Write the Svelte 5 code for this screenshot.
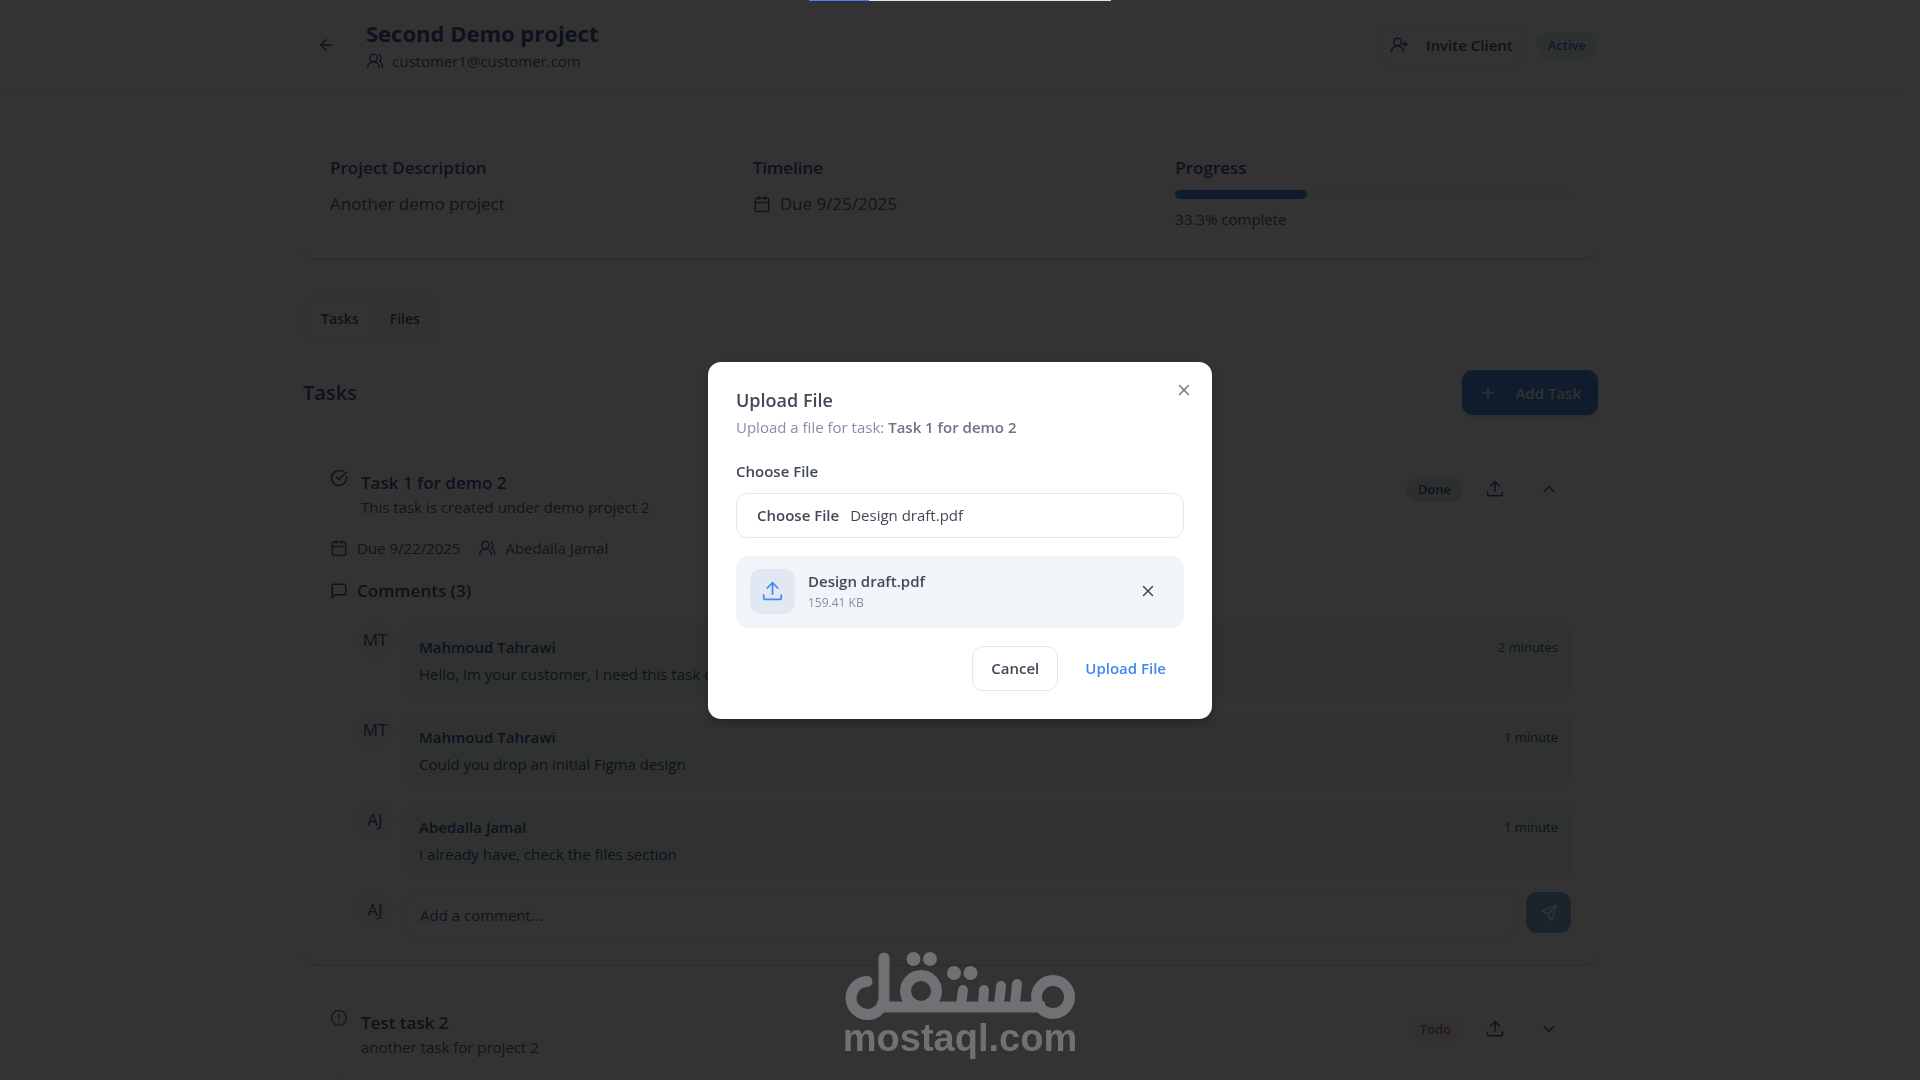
<script>
	let comment = $state('');

	const stats = { description: 'Another demo project', due: 'Due 9/25/2025', progress: 33.3 };

	const comments = [
		{ initials: 'MT', name: 'Mahmoud Tahrawi', text: 'Hello, Im your customer, I need this task done', time: '2 minutes' },
		{ initials: 'MT', name: 'Mahmoud Tahrawi', text: 'Could you drop an initial Figma design', time: '1 minute' },
		{ initials: 'AJ', name: 'Abedalla Jamal', text: 'I already have, check the files section', time: '1 minute' }
	];

	const icons = {
		back: ['m12 19-7-7 7-7', 'M19 12H5'],
		users: ['M18 21a8 8 0 0 0-16 0', 'M10 3a5 5 0 1 0 0 10a5 5 0 1 0 0-10', 'M22 20c0-3.37-2-6.5-4-8a5 5 0 0 0-.45-8.3'],
		userPlus: ['M2 21a8 8 0 0 1 16 0', 'M10 3a5 5 0 1 0 0 10a5 5 0 1 0 0-10', 'M20 8v6', 'M23 11h-6'],
		calendar: ['M8 2v4', 'M16 2v4', 'M5 4h14a2 2 0 0 1 2 2v14a2 2 0 0 1-2 2H5a2 2 0 0 1-2-2V6a2 2 0 0 1 2-2z', 'M3 10h18'],
		check: ['M21.8 10A10 10 0 1 1 17 3.34', 'm9 11 3 3L22 4'],
		alert: ['M12 2a10 10 0 1 0 0 20a10 10 0 1 0 0-20', 'M12 7v6', 'M12 16.5v.5'],
		message: ['M21 15a2 2 0 0 1-2 2H7l-4 4V5a2 2 0 0 1 2-2h14a2 2 0 0 1 2 2z'],
		upload: ['M12 15V2', 'm6 8 6-6 6 6', 'M2 16v3a2 2 0 0 0 2 2h16a2 2 0 0 0 2-2v-3'],
		plus: ['M5 12h14', 'M12 5v14'],
		up: ['m18 15-6-6-6 6'],
		down: ['m6 9 6 6 6-6'],
		close: ['M18 6 6 18', 'M6 6l12 12'],
		send: ['M22 2 15 22 11 13 2 9z', 'M22 2 11 13']
	};
</script>

{#snippet icon(name, size = 18)}
	<svg class="icon" viewBox="0 0 24 24" width={size} height={size} aria-hidden="true">
		{#each icons[name] as d}<path {d} />{/each}
	</svg>
{/snippet}

{#snippet taskActions(status, open)}
	<div class="task-actions">
		<span class="badge {status.toLowerCase()}">{status}</span>
		<button class="icon-btn" aria-label="Upload file">{@render icon('upload')}</button>
		<button class="icon-btn" aria-label={open ? 'Collapse' : 'Expand'}>{@render icon(open ? 'up' : 'down')}</button>
	</div>
{/snippet}

<div class="page">
	<header>
		<div class="wrap bar">
			<button class="icon-btn back" aria-label="Back">{@render icon('back')}</button>
			<div class="heading">
				<h1>Second Demo project</h1>
				<p class="meta">{@render icon('users')}<span>customer1@customer.com</span></p>
			</div>
			<button class="btn outline invite">{@render icon('userPlus')}Invite Client</button>
			<span class="badge active">Active</span>
		</div>
	</header>

	<main class="wrap">
		<section class="card stats">
			<div>
				<h3>Project Description</h3>
				<p>{stats.description}</p>
			</div>
			<div>
				<h3>Timeline</h3>
				<p class="due">{@render icon('calendar')}{stats.due}</p>
			</div>
			<div>
				<h3>Progress</h3>
				<div class="track"><div class="fill" style="width: {stats.progress}%"></div></div>
				<p class="percent">{stats.progress}% complete</p>
			</div>
		</section>

		<div class="tabs" role="tablist">
			<button role="tab" aria-selected="true">Tasks</button>
			<button role="tab" aria-selected="false">Files</button>
		</div>

		<div class="section-head">
			<h2>Tasks</h2>
			<button class="btn primary">{@render icon('plus')}Add Task</button>
		</div>

		<article class="card task">
			<div class="task-head">
				<span class="state">{@render icon('check')}</span>
				<div class="task-title">
					<h3>Task 1 for demo 2</h3>
					<p>This task is created under demo project 2</p>
				</div>
				{@render taskActions('Done', true)}
			</div>
			<div class="task-meta">
				<span>{@render icon('calendar')}Due 9/22/2025</span>
				<span>{@render icon('users')}Abedalla Jamal</span>
			</div>
			<h4>{@render icon('message')}Comments (3)</h4>
			<ul>
				{#each comments as c}
					<li>
						<span class="avatar">{c.initials}</span>
						<div class="bubble">
							<div class="bubble-head"><strong>{c.name}</strong><time>{c.time}</time></div>
							<p>{c.text}</p>
						</div>
					</li>
				{/each}
			</ul>
			<form class="reply" onsubmit={(e) => e.preventDefault()}>
				<span class="avatar">AJ</span>
				<input type="text" aria-label="Add a comment" placeholder="Add a comment..." bind:value={comment} />
				<button class="send" aria-label="Send">{@render icon('send')}</button>
			</form>
		</article>

		<article class="card task">
			<div class="task-head">
				<span class="state todo-state">{@render icon('alert')}</span>
				<div class="task-title">
					<h3>Test task 2</h3>
					<p>another task for project 2</p>
				</div>
				{@render taskActions('Todo', false)}
			</div>
			<div class="task-meta">
				<span>{@render icon('calendar')}</span>
			</div>
		</article>
	</main>
</div>

<div class="overlay">
	<div class="dialog" role="dialog" aria-modal="true" aria-labelledby="dialog-title">
		<button class="close" aria-label="Close">{@render icon('close')}</button>
		<h2 id="dialog-title">Upload File</h2>
		<p class="sub">Upload a file for task: <b>Task 1 for demo 2</b></p>
		<label for="file">Choose File</label>
		<div class="file-field">
			<button id="file">Choose File</button>
			<span>Design draft.pdf</span>
		</div>
		<div class="file-row">
			<span class="file-icon">{@render icon('upload', 21)}</span>
			<div class="file-info">
				<strong>Design draft.pdf</strong>
				<small>159.41 KB</small>
			</div>
			<button class="icon-btn remove" aria-label="Remove file">{@render icon('close')}</button>
		</div>
		<div class="dialog-actions">
			<button class="btn outline">Cancel</button>
			<button class="btn text">Upload File</button>
		</div>
	</div>
</div>

<div class="loading"><div></div></div>

<div class="watermark">
	<svg viewBox="0 0 230 68" width="230" height="68" role="img" aria-label="مستقل">
		<g fill="none" stroke="currentColor" stroke-width="11" stroke-linecap="round">
			<path d="M22 29.500A16.500 16.500 0 1 0 39 45V6" />
			<path d="M32 55H200" stroke-linecap="butt" />
			<circle cx="76" cy="39" r="15.500" />
			<circle cx="208" cy="45" r="16.500" />
			<path d="M118 38l-2 14M139 38l-1 14M156 34l-2 18M172 32l-2 20" stroke-width="10" />
		</g>
		<g fill="currentColor">
			<circle cx="68.500" cy="7" r="7" />
			<circle cx="85" cy="7" r="7" />
			<circle cx="109" cy="21" r="7" />
			<circle cx="125.500" cy="21" r="7" />
		</g>
	</svg>
	<span>mostaql.com</span>
</div>

<style>
	:global(body) {
		background: #fff;
		overflow: hidden;
	}

	.page,
	.overlay {
		font-family: 'Open Sans', 'Noto Sans', sans-serif;
		font-size: 15px;
		line-height: 24px;
	}

	.page {
		height: 100vh;
		overflow: hidden;
		padding-right: 19px;
		color: #425b90;
		--muted: #506a98;
	}

	h1, h2, h3, h4, p, ul {
		margin: 0;
		padding: 0;
	}

	button,
	input {
		font: inherit;
		color: inherit;
		border: 0;
		background: none;
		padding: 0;
	}

	.icon {
		flex: none;
		fill: none;
		stroke: currentColor;
		stroke-width: 2;
		stroke-linecap: round;
		stroke-linejoin: round;
	}

	.wrap {
		max-width: 1295px;
		margin: 0 auto;
	}

	header {
		border-bottom: 1px solid #e0e6ea;
	}

	.bar {
		display: flex;
		align-items: center;
		height: 90px;
	}

	.icon-btn {
		display: grid;
		place-items: center;
		width: 45px;
		height: 40px;
	}

	.heading {
		flex: 1;
		margin-left: 18px;
	}

	h1 {
		font-size: 22px;
		line-height: 32px;
		font-weight: 700;
	}

	.meta {
		display: flex;
		align-items: center;
		gap: 8px;
		color: var(--muted);
	}

	.btn {
		display: flex;
		align-items: center;
		justify-content: center;
		box-sizing: border-box;
		height: 45px;
		padding: 0 18px;
		border-radius: 11px;
		font-weight: 600;
	}

	.outline {
		border: 1px solid #e2e8f0;
	}

	.invite {
		gap: 18px;
		height: 40px;
		padding: 0 13px;
	}

	.badge {
		border-radius: 13px;
		padding: 0 12px;
		font-size: 13px;
		line-height: 25px;
		font-weight: 600;
	}

	.active {
		margin-left: 9px;
		color: #4880d8;
		background: #e6f2f2;
	}

	.done {
		background: #e2ebe9;
	}

	.todo {
		color: #a08078;
		background: #f8f6ee;
	}

	.card {
		box-sizing: border-box;
		border-radius: 14px;
		padding: 26px 27px;
		box-shadow: 0 3px 3px -1px #d8e6e2;
	}

	.stats {
		display: grid;
		grid-template-columns: repeat(3, 1fr);
		gap: 27px;
		min-height: 128px;
		margin-top: 39px;
		font-size: 17px;
	}

	.stats h3 {
		margin-bottom: 10px;
		font-size: 17px;
		font-weight: 600;
	}

	.stats p {
		line-height: 27px;
		color: var(--muted);
	}

	.due {
		display: flex;
		align-items: center;
		gap: 9px;
	}

	.track {
		height: 9px;
		border-radius: 5px;
		background: #f6fbf8;
	}

	.fill {
		height: 100%;
		border-radius: 5px;
		background: #4a8ada;
	}

	.stats .percent {
		margin-top: 8px;
		font-size: 15px;
		line-height: 24px;
	}

	.tabs {
		display: inline-flex;
		gap: 3px;
		margin-top: 37px;
		padding: 4px;
		border-radius: 13px;
		background: #f3faf6;
	}

	.tabs button {
		height: 40px;
		padding: 0 14px;
		border-radius: 11px;
		font-size: 14px;
		font-weight: 600;
	}

	.tabs [aria-selected='true'] {
		background: #fff;
	}

	.section-head {
		display: flex;
		align-items: center;
		justify-content: space-between;
		margin-top: 27px;
	}

	h2 {
		font-size: 20px;
		font-weight: 600;
	}

	.primary {
		gap: 18px;
		padding: 0 17px;
		color: #f0f4f4;
		background: #4a8ada;
		box-shadow: 0 2px 4px #d8e6e2;
	}

	.task {
		margin-top: 19px;
	}

	.section-head + .task {
		margin-top: 28px;
		padding-bottom: 27px;
	}

	.task-head {
		display: flex;
	}

	.state {
		display: flex;
		margin-right: 13px;
		align-self: flex-start;
	}

	.todo-state {
		color: #8a7470;
	}

	.task-title {
		flex: 1;
		padding-top: 1px;
	}

	.task-title h3 {
		font-size: 17px;
		line-height: 25px;
		font-weight: 600;
	}

	.task-title p,
	.task-meta {
		color: var(--muted);
	}

	.task-actions {
		display: flex;
		align-items: center;
		gap: 9px;
		height: 40px;
	}

	.task-meta {
		display: flex;
		gap: 18px;
		margin-top: 17px;
	}

	.task-meta span,
	h4 {
		display: flex;
		align-items: center;
		gap: 9px;
		min-height: 24px;
	}

	h4 {
		margin-top: 19px;
		font-size: 17px;
		font-weight: 600;
	}

	ul {
		display: grid;
		gap: 13px;
		margin-top: 19px;
		list-style: none;
	}

	li,
	.reply {
		display: flex;
		padding-left: 27px;
	}

	.avatar {
		flex: none;
		width: 36px;
		height: 36px;
		margin-right: 13px;
		border-radius: 50%;
		background: #f3faf6;
		font-size: 17px;
		line-height: 36px;
		text-align: center;
	}

	.bubble {
		flex: 1;
		padding: 13px;
		border-radius: 11px;
		background: #f0faf4;
	}

	.bubble-head {
		display: flex;
		justify-content: space-between;
		margin-bottom: 3px;
	}

	.bubble strong {
		font-weight: 600;
	}

	time {
		font-size: 13px;
	}

	.reply {
		margin-top: 13px;
	}

	.reply input {
		flex: 1;
		box-sizing: border-box;
		height: 45px;
		padding: 0 13px;
		border: 1px solid #e2e8f0;
		border-radius: 11px;
	}

	.reply input::placeholder {
		color: var(--muted);
		opacity: 1;
	}

	.send {
		display: grid;
		place-items: center;
		width: 45px;
		height: 41px;
		margin-left: 9px;
		border-radius: 11px;
		color: #fff;
		background: #88b4e0;
	}

	.overlay {
		position: fixed;
		inset: 0;
		display: grid;
		place-items: center;
		background: rgba(0, 0, 0, 0.8);
		color: #414956;
	}

	.dialog {
		position: relative;
		box-sizing: border-box;
		width: 504px;
		padding: 26px 28px 28px;
		border-radius: 13px;
		background: #fff;
		box-shadow: 0 4px 10px rgba(0, 0, 0, 0.3);
	}

	.close {
		position: absolute;
		top: 19px;
		right: 19px;
		display: flex;
		color: #6b7484;
	}

	.dialog h2 {
		font-size: 18px;
	}

	.sub {
		margin-top: 3px;
		color: #8490a2;
	}

	.sub b {
		font-weight: 600;
		color: #6b7484;
	}

	label {
		display: block;
		margin: 20px 0 10px;
		font-weight: 600;
	}

	.file-field {
		display: flex;
		align-items: center;
		gap: 11px;
		box-sizing: border-box;
		height: 45px;
		padding: 0 20px;
		border: 1px solid #e2e8f0;
		border-radius: 11px;
	}

	.file-field button {
		font-weight: 600;
	}

	.file-row {
		display: flex;
		align-items: center;
		margin-top: 18px;
		padding: 13px 14px 14px;
		border-radius: 13px;
		background: #f1f5f9;
	}

	.file-icon {
		display: grid;
		place-items: center;
		width: 45px;
		height: 45px;
		border-radius: 11px;
		background: #e1e8f1;
		color: #4285f4;
	}

	.file-info {
		flex: 1;
		display: grid;
		margin-left: 13px;
	}

	.file-info strong {
		font-weight: 600;
	}

	.file-info small {
		font-size: 12px;
		line-height: 20px;
		color: #8490a2;
	}

	.dialog-actions {
		display: flex;
		justify-content: flex-end;
		gap: 9px;
		margin-top: 18px;
	}

	.text {
		color: #4285f4;
	}

	.loading {
		position: fixed;
		top: 0;
		left: 50%;
		width: 302px;
		height: 1px;
		margin-left: -151px;
		background: #dde6f0;
	}

	.loading div {
		width: 20%;
		height: 100%;
		background: #4285f4;
	}

	.watermark {
		position: fixed;
		right: 0;
		bottom: 24px;
		left: 0;
		display: grid;
		justify-items: center;
		color: #707174;
		font: 700 38px/36px 'Liberation Sans', sans-serif;
		pointer-events: none;
	}
</style>
